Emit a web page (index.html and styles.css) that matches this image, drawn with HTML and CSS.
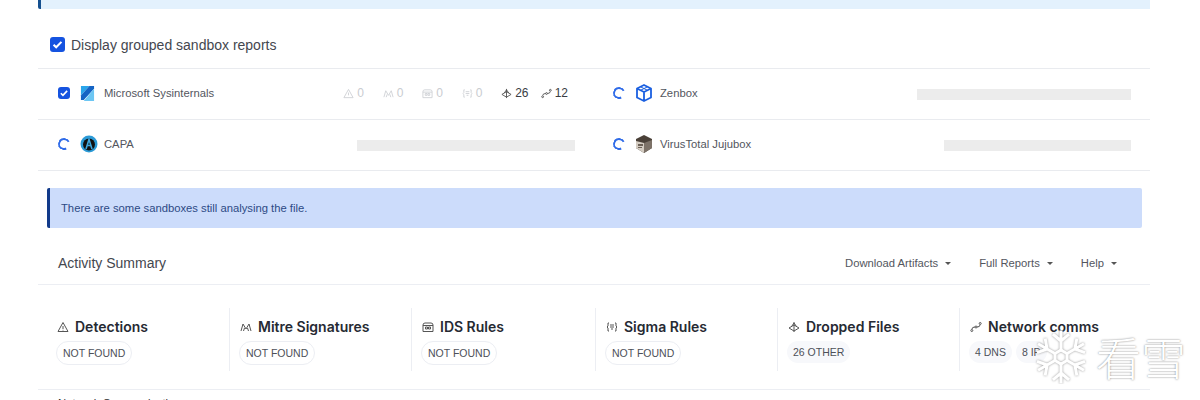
FILE: index.html
```html
<!DOCTYPE html>
<html>
<head>
    <title>Behavior</title>
    <link rel="stylesheet" href="styles.css">
</head>
<body>
    <div class="page">
        <div class="top-banner"></div>

        <label class="group-toggle">
            <span class="check check-big"><svg viewBox="0 0 16 16"><path d="M3.8 8.3l2.8 2.7 5.6-5.8"/></svg></span>
            Display grouped sandbox reports
        </label>

        <div class="sandboxes">
            <div class="sandbox">
                <div class="sandbox-name">
                    <span class="check"><svg viewBox="0 0 16 16"><path d="M3.8 8.3l2.8 2.7 5.6-5.8"/></svg></span>
                    <svg class="logo" viewBox="0 0 16 16">
                        <path fill="#2aa5ea" d="M1 0h9L1 10z"/>
                        <path fill="#1564c4" d="M10 0h5v3L4 15H1v-5z"/>
                        <path fill="#6cc6f3" d="M15 3v13H4z"/>
                    </svg>
                    Microsoft Sysinternals
                </div>
                <div class="stats">
                    <span class="stat stat-off"><svg viewBox="0 0 12 12"><path d="M6 1.500L11 10.500H1zM6 5v3"/></svg>0</span>
                    <span class="stat stat-off"><svg viewBox="0 0 12 12"><path d="M1 10L3 3l3 5 3-5 2 7M3.500 10l1-3M8.500 10l-1-3"/></svg>0</span>
                    <span class="stat stat-off"><svg viewBox="0 0 12 12"><path d="M1 10.500V4q0-2 2-2h6q2 0 2 2v6.500zM3.500 6h2v2h-2zM6.500 6h2v2h-2zM1 4.500h10"/></svg>0</span>
                    <span class="stat stat-off"><svg viewBox="0 0 12 12"><path d="M3 2H2v3l-1 1 1 1v3h1M9 2h1v3l1 1-1 1v3H9M4 4h4M4 6h4M5 8h2"/></svg>0</span>
                    <span class="stat"><svg viewBox="0 0 12 12"><path d="M6 1v10M1 7l5-3 5 3-5 3zM3.500 5.500L6 2l2.500 3.500"/></svg>26</span>
                    <span class="stat"><svg viewBox="0 0 12 12"><circle cx="1.800" cy="9.500" r="1"/><circle cx="6" cy="6" r="1"/><circle cx="10.200" cy="2.500" r="1"/><path d="M2 8q0-2 3-2M7 6q3 0 3-2"/></svg>12</span>
                </div>
            </div>
            <div class="sandbox">
                <div class="sandbox-name">
                    <span class="spinner"></span>
                    <svg class="logo logo-big" viewBox="0 0 18 18">
                        <path fill="none" stroke="#1a5fe0" stroke-width="1.800" stroke-linejoin="round" d="M9 1l7 3.500v9L9 17l-7-3.500v-9zM2 4.500L9 8l7-3.500M9 8v9"/>
                        <path fill="none" stroke="#1a5fe0" stroke-width="1" d="M5.500 2.800L12.500 6.300M12.500 2.800L5.500 6.300"/>
                    </svg>
                    Zenbox
                </div>
                <div class="placeholder placeholder-zen"></div>
            </div>
            <div class="sandbox">
                <div class="sandbox-name">
                    <span class="spinner"></span>
                    <svg class="logo logo-big logo-capa" viewBox="0 0 18 18">
                        <circle cx="9" cy="9" r="8.500" fill="#2b9ad6"/>
                        <circle cx="9" cy="9.500" r="6" fill="#111"/>
                        <path fill="none" stroke="#3fa7de" stroke-width="1.600" d="M6 14L9 4.500 12 14M7 10.500h4"/>
                    </svg>
                    CAPA
                </div>
                <div class="placeholder placeholder-capa"></div>
            </div>
            <div class="sandbox">
                <div class="sandbox-name">
                    <span class="spinner"></span>
                    <svg class="logo logo-big" viewBox="0 0 18 18">
                        <path fill="#4a4038" d="M9 0l8 4v9l-8 5-8-5V4z"/>
                        <path fill="#d4ccc2" d="M1 6l8 2v10l-8-5z"/>
                        <path fill="#7d7268" d="M9 8l8-3v8l-8 5z"/>
                        <path fill="#6d6258" d="M3 9h5v2H3zM3 12h4v1H3z"/>
                    </svg>
                    VirusTotal Jujubox
                </div>
                <div class="placeholder placeholder-juju"></div>
            </div>
        </div>

        <div class="alert">There are some sandboxes still analysing the file.</div>

        <div class="activity-head">
            <div class="activity-title">Activity Summary</div>
            <div class="activity-menu">
                <span class="menu-item">Download Artifacts<i class="caret"></i></span>
                <span class="menu-item">Full Reports<i class="caret"></i></span>
                <span class="menu-item">Help<i class="caret"></i></span>
            </div>
        </div>

        <div class="summary">
            <div class="summary-col">
                <h3><svg viewBox="0 0 12 12"><path d="M6 1.500L11 10.500H1zM6 5v3M6 8.800v.7"/></svg>Detections</h3>
                <div class="pills"><span class="pill pill-empty">NOT FOUND</span></div>
            </div>
            <div class="summary-col">
                <h3><svg viewBox="0 0 12 12"><path d="M1 10L3 3l3 5 3-5 2 7M3.500 10l1-3M8.500 10l-1-3"/></svg>Mitre Signatures</h3>
                <div class="pills"><span class="pill pill-empty">NOT FOUND</span></div>
            </div>
            <div class="summary-col">
                <h3><svg viewBox="0 0 12 12"><path d="M1 10.500V4q0-2 2-2h6q2 0 2 2v6.500zM3.500 6h2v2h-2zM6.500 6h2v2h-2zM1 4.500h10"/></svg>IDS Rules</h3>
                <div class="pills"><span class="pill pill-empty">NOT FOUND</span></div>
            </div>
            <div class="summary-col">
                <h3><svg viewBox="0 0 12 12"><path d="M3 2H2v3l-1 1 1 1v3h1M9 2h1v3l1 1-1 1v3H9M4 4h4M4 6h4M5 8h2"/></svg>Sigma Rules</h3>
                <div class="pills"><span class="pill pill-empty">NOT FOUND</span></div>
            </div>
            <div class="summary-col">
                <h3><svg viewBox="0 0 12 12"><path d="M6 1v10M1 7l5-3 5 3-5 3zM3.500 5.500L6 2l2.500 3.500"/></svg>Dropped Files</h3>
                <div class="pills"><span class="pill">26 OTHER</span></div>
            </div>
            <div class="summary-col">
                <h3><svg viewBox="0 0 12 12"><circle cx="1.800" cy="9.500" r="1"/><circle cx="6" cy="6" r="1"/><circle cx="10.200" cy="2.500" r="1"/><path d="M2 8q0-2 3-2M7 6q3 0 3-2"/></svg>Network comms</h3>
                <div class="pills"><span class="pill">4 DNS</span><span class="pill">8 IP</span></div>
            </div>
        </div>

        <div class="next-section">Network Communication</div>
    </div>

    <div class="watermark">
        <svg viewBox="0 0 54 54">
            <g class="flake-arms">
                <path d="M27 20V2M27 11l-7-6M27 11l7-6"/>
                <path d="M27 20V2M27 11l-7-6M27 11l7-6" transform="rotate(60 27 27)"/>
                <path d="M27 20V2M27 11l-7-6M27 11l7-6" transform="rotate(120 27 27)"/>
                <path d="M27 20V2M27 11l-7-6M27 11l7-6" transform="rotate(180 27 27)"/>
                <path d="M27 20V2M27 11l-7-6M27 11l7-6" transform="rotate(240 27 27)"/>
                <path d="M27 20V2M27 11l-7-6M27 11l7-6" transform="rotate(300 27 27)"/>
                <path d="M27 20l6 3.500v7L27 34l-6-3.500v-7z"/>
            </g>
        </svg>
        <span class="watermark-text">看雪</span>
    </div>
</body>
</html>
```

FILE: styles.css
```css
html, body {
    height: 400px;
    overflow: hidden;
}

body {
    font-family: "Liberation Sans", Arial, sans-serif;
    margin: 0;
    background: #fff;
    color: #333;
}

.page {
    width: 1112px;
    margin-left: 38px;
}

.top-banner {
    height: 9px;
    background: #e3f1fd;
    border-left: 3px solid #15508f;
    border-bottom-left-radius: 2px;
    box-sizing: border-box;
}

.group-toggle {
    display: flex;
    align-items: center;
    gap: 6px;
    height: 60px;
    padding: 12px 0 0 12px;
    box-sizing: border-box;
    font-size: 14px;
    color: #44474f;
    border-bottom: 1px solid #e9ebef;
}

.check {
    width: 12px;
    height: 12px;
    border-radius: 3px;
    background: #1553e0;
    display: inline-flex;
    flex: none;
}

.check-big {
    width: 15px;
    height: 15px;
}

.check svg {
    width: 100%;
    height: 100%;
    fill: none;
    stroke: #fff;
    stroke-width: 2.200;
}

.sandboxes {
    display: grid;
    grid-template-columns: 555px 1fr;
    padding-left: 20px;
    margin-bottom: 17px;
    background: linear-gradient(#e9ebef, #e9ebef) 0 50px / 100% 1px no-repeat,
        linear-gradient(#e9ebef, #e9ebef) 0 101px / 100% 1px no-repeat;
}

.sandbox {
    height: 51px;
    display: flex;
    align-items: center;
    justify-content: space-between;
    padding-right: 19px;
    box-sizing: border-box;
}

.sandbox:nth-child(odd) {
    padding-right: 38px;
}

.sandbox-name {
    display: flex;
    align-items: center;
    font-size: 11.250px;
    color: #53565e;
    margin-top: -3px;
}

.logo {
    width: 15px;
    height: 15px;
    margin: 0 9px 0 10px;
}

.logo-big {
    width: 18px;
    height: 18px;
    margin: 0 7px 0 10px;
}

.logo-capa {
    margin-right: 6px;
}

.spinner {
    width: 12px;
    height: 12px;
    border: 2px solid #2f6be8;
    border-right-color: transparent;
    border-radius: 50%;
    flex: none;
    box-sizing: border-box;
    transform: rotate(20deg);
}

.stats {
    display: flex;
    margin-right: 7px;
    margin-top: -3px;
}

.stat {
    display: flex;
    align-items: center;
    gap: 3px;
    width: 39.500px;
    font-size: 12px;
    color: #3a3d44;
}

.stat:last-child {
    width: auto;
}

.stat svg {
    width: 11px;
    height: 11px;
    fill: none;
    stroke: #555;
    stroke-width: 1;
}

.stat-off {
    color: #c9ccd1;
}

.stat-off svg {
    stroke: #cfd1d5;
}

.placeholder {
    height: 11px;
    background: #ececec;
}

.placeholder-capa {
    width: 218px;
}

.placeholder-zen {
    width: 214px;
}

.placeholder-juju {
    width: 187px;
}

.alert {
    margin-left: 9px;
    margin-right: 8px;
    height: 40px;
    display: flex;
    align-items: center;
    padding-left: 11px;
    background: #ccdcfb;
    border-left: 3px solid #123a8a;
    border-radius: 2px;
    font-size: 11.250px;
    color: #2c4a85;
}

.activity-head {
    display: flex;
    align-items: center;
    justify-content: space-between;
    height: 57px;
    padding: 14px 33px 0 20px;
    box-sizing: border-box;
    border-bottom: 1px solid #eceef3;
}

.activity-title {
    font-size: 14px;
    color: #44474f;
}

.activity-menu {
    display: flex;
    gap: 28px;
}

.menu-item {
    font-size: 11.250px;
    color: #53565e;
    display: flex;
    align-items: center;
}

.caret {
    width: 0;
    height: 0;
    margin-left: 7px;
    border-left: 3px solid transparent;
    border-right: 3px solid transparent;
    border-top: 3px solid #555;
}

.summary {
    display: grid;
    grid-template-columns: 181px 182px 184px 182px 182px 1fr;
    padding: 23px 0 0 10px;
    height: 105px;
    box-sizing: border-box;
    border-bottom: 1px solid #eceef3;
    align-items: start;
}

.summary-col {
    height: 63px;
    padding-left: 10px;
    border-left: 1px solid #eceef3;
    box-sizing: border-box;
}

.summary-col:first-child {
    padding-left: 9px;
    border-left: none;
}

.summary-col h3 {
    display: flex;
    align-items: center;
    gap: 6px;
    margin: 11px 0 6px;
    font-family: Inter, "Liberation Sans", sans-serif;
    font-size: 14px;
    line-height: 16px;
    font-weight: 600;
    color: #262a33;
}

.summary-col h3 svg {
    width: 12px;
    height: 12px;
    fill: none;
    stroke: #555;
    stroke-width: 1;
}

.pills {
    display: flex;
    gap: 4px;
    margin-left: -1px;
}

.pill {
    font-size: 10.500px;
    line-height: 14px;
    padding: 4px 6px;
    border-radius: 12px;
    background: #f7f8fb;
    color: #4d5059;
}

.pill-empty {
    background: #fff;
    border: 1px solid #eceef3;
    padding: 4px 6px;
    height: 14px;
}

.next-section {
    padding: 7px 0 0 20px;
    font-size: 11.250px;
    font-weight: 500;
    color: #333;
}

.watermark {
    position: absolute;
    left: 1034px;
    top: 330px;
    display: flex;
    align-items: center;
    gap: 8px;
}

.watermark svg {
    width: 54px;
    height: 54px;
    fill: none;
    stroke-linecap: square;
}

.flake-arms path {
    stroke: #fff;
    stroke-width: 3;
}

.flake-arms {
    filter: drop-shadow(0 0 1px #999);
}

.watermark-text {
    font-family: "Noto Sans CJK SC", sans-serif;
    font-size: 45px;
    line-height: 50px;
    font-weight: 300;
    color: #fff;
    text-shadow: 0 0 2px #777;
}
```
